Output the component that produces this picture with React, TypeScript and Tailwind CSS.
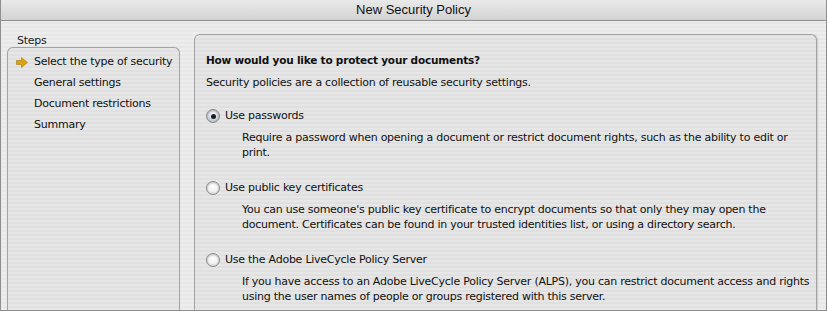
import React from 'react';

const steps = ['Select the type of security', 'General settings', 'Document restrictions', 'Summary'];

const options = [
  {
    label: 'Use passwords',
    checked: true,
    text: ['Require a password when opening a document or restrict document rights, such as the ability to edit or', 'print.'],
  },
  {
    label: 'Use public key certificates',
    checked: false,
    text: [
      "You can use someone's public key certificate to encrypt documents so that only they may open the",
      'document. Certificates can be found in your trusted identities list, or using a directory search.',
    ],
  },
  {
    label: 'Use the Adobe LiveCycle Policy Server',
    checked: false,
    text: [
      'If you have access to an Adobe LiveCycle Policy Server (ALPS), you can restrict document access and rights',
      'using the user names of people or groups registered with this server.',
    ],
  },
];

function Radio({ checked }: { checked: boolean }) {
  return (
    <span
      className={`flex items-center justify-center w-[14px] h-[14px] rounded-full border border-[#8a8a8a] shadow-[inset_0_1px_2px_rgba(0,0,0,0.25)] ${
        checked
          ? 'bg-[radial-gradient(circle_at_50%_35%,#ffffff_0%,#c9d3df_60%,#8fa0b4_100%)]'
          : 'bg-[radial-gradient(circle_at_50%_30%,#ffffff_0%,#f2f2f2_55%,#c8c8c8_100%)]'
      }`}
    >
      {checked && <span className="w-[5px] h-[5px] rounded-full bg-[#1e1e1e]" />}
    </span>
  );
}

export default function App() {
  return (
    <div className="w-[827px] h-[311px] flex flex-col overflow-hidden border-l border-r border-b border-[#8e8e8e] font-['DejaVu_Sans',sans-serif] text-[11px] tracking-[-0.25px] text-[#111] whitespace-nowrap">
      <div className="h-[21px] flex-none flex items-center justify-center border-b border-[#8f8f8f] bg-[linear-gradient(#e9e9e9,#d3d3d3)] text-[13px] tracking-normal font-['Liberation_Sans',sans-serif] text-[#111]">
        New Security Policy
      </div>

      <div className="flex-1 flex min-h-0 pl-[6px] pr-[9px] bg-[image:repeating-linear-gradient(0deg,#ededed_0px,#ededed_2px,#e7e7e7_2px,#e7e7e7_4px)]">
        <div className="w-[173px] flex flex-col">
          <div className="pt-[13px] pl-[10px] h-[26px] leading-[13px] text-[#222]">Steps</div>
          <div className="flex-1 rounded-t-[6px] border-t border-l border-r border-[#a3a3a3] shadow-[0_0_1px_rgba(0,0,0,0.15)] bg-[image:repeating-linear-gradient(0deg,#e6e6e6_0px,#e6e6e6_2px,#e0e0e0_2px,#e0e0e0_4px)] pt-[4px]">
            {steps.map((s, i) => (
              <div key={s} className="flex items-center h-[21px]">
                <span className="w-[26px] flex justify-center pl-[2px]">
                  {i === 0 && (
                    <svg width="12" height="11" viewBox="0 0 12 11">
                      <path d="M0.5 3.5H5.5V0.5L11.5 5.5L5.5 10.5V7.5H0.5Z" fill="#dba311" stroke="#a97a05" strokeWidth="0.6" />
                    </svg>
                  )}
                </span>
                <span>{s}</span>
              </div>
            ))}
          </div>
        </div>

        <div className="flex-1 ml-[14px] mt-[13px] rounded-t-[6px] border-t border-l border-r border-[#a3a3a3] shadow-[1px_0_1px_rgba(0,0,0,0.12)] bg-[image:repeating-linear-gradient(0deg,#e6e6e6_0px,#e6e6e6_2px,#e0e0e0_2px,#e0e0e0_4px)] pl-[11px] pt-[19px]">
          <div className="font-bold text-[10.5px] tracking-[-0.2px] leading-[13px]">How would you like to protect your documents?</div>
          <div className="mt-[9px] leading-[13px]">Security policies are a collection of reusable security settings.</div>

          <div className="mt-[19px] flex flex-col gap-[20px]">
            {options.map((o) => (
              <div key={o.label}>
                <div className="flex items-center gap-[5px] h-[16px]">
                  <Radio checked={o.checked} />
                  <span>{o.label}</span>
                </div>
                <div className="mt-[6px] pl-[36px] leading-[15px]">
                  {o.text.map((t) => (
                    <div key={t}>{t}</div>
                  ))}
                </div>
              </div>
            ))}
          </div>
        </div>
      </div>
    </div>
  );
}
